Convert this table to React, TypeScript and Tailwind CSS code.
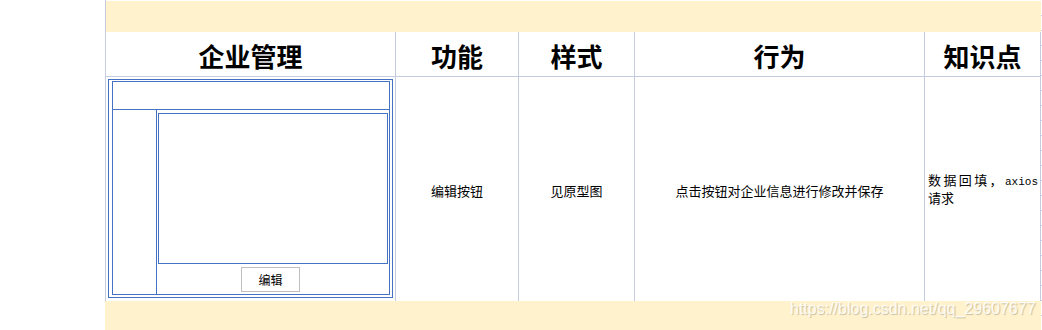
/** 企业管理 需求表：表头 + 一行说明（线框图 / 功能 / 样式 / 行为 / 知识点） */

const cols = ["w-[290px]", "w-[123px]", "w-[116px]", "w-[290px]", "flex-1"];

export default function App() {
  return (
    <div className="relative flex h-[330px] w-[1042px] overflow-hidden bg-white font-['Noto_Sans_CJK_SC',sans-serif] text-black">
      <div className="w-[105px] shrink-0" />
      <div className="flex w-[936px] shrink-0 flex-col">
        <div className="h-px border-l border-[#c5cce0]" />
        <div className="h-[31px] border-l border-[#c5cce0] bg-[#fff2cc]" />
        <HeaderRow titles={["企业管理", "功能", "样式", "行为", "知识点"]} />
        <div className="flex h-[224px] border-x border-[#c5cce0] text-[13px] leading-4">
          <div className={`${cols[0]} border-r border-[#c5cce0] p-[2px]`}>
            <Wireframe />
          </div>
          <Cell w={cols[1]}>编辑按钮</Cell>
          <Cell w={cols[2]}>见原型图</Cell>
          <Cell w={cols[3]}>点击按钮对企业信息进行修改并保存</Cell>
          <div className="flex flex-1 flex-col justify-center pl-[3px]">
            <div className="flex items-baseline whitespace-nowrap">
              <span className="tracking-[2.4px]">数据回填，</span>
              <span className="font-['Liberation_Mono',monospace] text-[11px]">axios</span>
            </div>
            <div>请求</div>
          </div>
        </div>
        <div className="flex-1 bg-[#fff2cc]" />
      </div>
      <Ticks />
      <div className="absolute left-[790px] top-[301px] font-['Liberation_Sans',sans-serif] text-[16px] leading-4 text-white/85 [text-shadow:1px_1px_1px_rgba(0,0,0,0.22)]">
        https://blog.csdn.net/qq_29607677
      </div>
    </div>
  );
}

function HeaderRow({ titles }: { titles: string[] }) {
  return (
    <div className="flex h-[45px] border-x border-b border-[#c5cce0]">
      {titles.map((t, i) => (
        <div
          key={t}
          className={`${cols[i]} ${i < titles.length - 1 ? "border-r border-[#c5cce0]" : ""} flex items-center justify-center pt-[3px] text-[26px] font-semibold leading-none`}
        >
          {t}
        </div>
      ))}
    </div>
  );
}

function Cell({ w, children }: { w: string; children: React.ReactNode }) {
  return (
    <div className={`${w} flex items-center justify-center border-r border-[#c5cce0] pt-[3px]`}>
      {children}
    </div>
  );
}

// 左侧原型图：双线外框 + 顶栏 + 侧栏 + 内容区 + 编辑按钮
function Wireframe() {
  return (
    <div className="h-[219px] w-[285px] border border-[#4472c4] pb-[2px] pl-[3px] pr-[2px] pt-px">
      <div className="flex h-full flex-col border border-[#4472c4]">
        <div className="h-[28px] border-b border-[#4472c4]" />
        <div className="flex flex-1">
          <div className="w-[44px] border-r border-[#4472c4]" />
          <div className="flex flex-1 flex-col px-px pt-[3px]">
            <div className="h-[151px] border border-[#4472c4]" />
            <div className="ml-[83px] mt-[3px] flex h-[25px] w-[59px] items-center justify-center border border-[#bfbfbf] text-[12px]">
              编辑
            </div>
          </div>
        </div>
      </div>
    </div>
  );
}

function Ticks() {
  return (
    <div className="flex w-px flex-col pt-px">
      {Array.from({ length: 22 }).map((_, i) => (
        <div key={i} className="h-[15px] shrink-0 border-b border-[#c5cce0]" />
      ))}
    </div>
  );
}
